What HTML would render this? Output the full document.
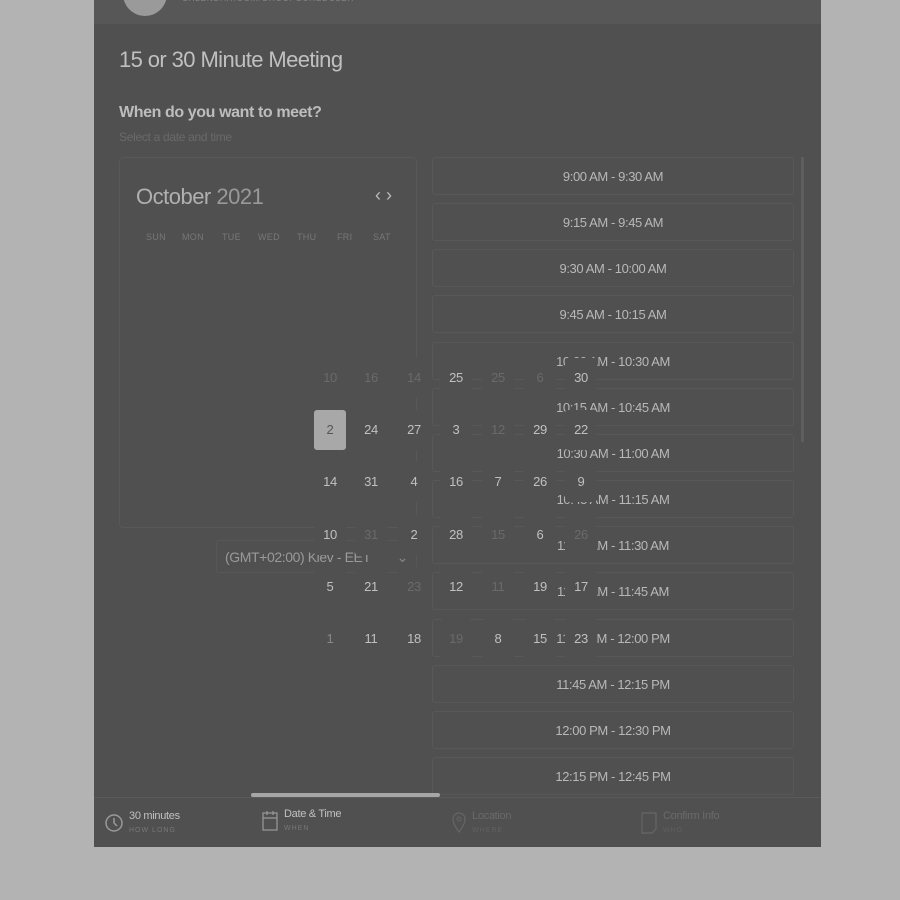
<!DOCTYPE html>
<html><head><style>
*{margin:0;padding:0;box-sizing:border-box}
body{width:900px;height:900px;background:#b3b3b3;font-family:"Liberation Sans",sans-serif;position:relative;overflow:hidden}
.panel{position:absolute;left:94px;top:0;width:727px;height:847px;background:#505050}
.hdr{position:absolute;left:94px;top:0;width:727px;height:24px;background:#575757}
.av{position:absolute;left:123px;top:-28px;width:44px;height:44px;border-radius:50%;background:#9a9a9a}
.a{position:absolute}
.slot{position:absolute;left:432px;width:362px;height:38px;border:1px solid #585858;border-radius:3px;color:#b8b8b8;font-size:13px;letter-spacing:-0.4px;text-align:center;line-height:38px}
.n{position:absolute;width:32px;height:40px;margin-left:-16px;margin-top:-20px;background:#505050;color:#c0c0c0;font-size:13px;letter-spacing:-0.3px;text-align:center;line-height:40px;border-radius:3px}
.d{color:#6a6a6a}
.wk{position:absolute;top:232px;font-size:9px;color:#777;letter-spacing:.3px}
</style></head><body>
<div class="panel"></div>
<div class="hdr"></div>
<div class="av"></div>
<div class="a" style="left:182px;top:-6px;width:220px;height:8px;color:#888;font-size:8px;letter-spacing:1px">CALENDAR.COM/GROUPSCHEDULER</div>
<div class="a" style="left:119px;top:47px;font-size:22px;color:#c0c0c0;letter-spacing:-0.6px">15 or 30 Minute Meeting</div>
<div class="a" style="left:119px;top:104px;font-size:16px;font-weight:bold;color:#bdbdbd;letter-spacing:-0.4px">When do you want to meet?</div>
<div class="a" style="left:119px;top:130px;font-size:12px;color:#6a6a6a;letter-spacing:-0.3px">Select a date and time</div>
<div class="a" style="left:119px;top:157px;width:298px;height:371px;border:1px solid #585858;border-radius:4px"></div>
<div class="a" style="left:136px;top:184px;font-size:22px;color:#b0b0b0;letter-spacing:-0.5px">October <span style="color:#999">2021</span></div>
<div class="a" style="left:375px;top:185px;font-size:18px;color:#bbb">‹ ›</div>
<div class="wk" style="left:146px">SUN</div><div class="wk" style="left:182px">MON</div><div class="wk" style="left:222px">TUE</div><div class="wk" style="left:258px">WED</div><div class="wk" style="left:297px">THU</div><div class="wk" style="left:337px">FRI</div><div class="wk" style="left:373px">SAT</div>
<div class="a" style="left:216px;top:540px;width:201px;height:33px;border:1px solid #575757;border-radius:3px;color:#9a9a9a;font-size:14px;letter-spacing:-0.4px;line-height:33px;padding-left:8px">(GMT+02:00) Kiev - EET<span style="position:absolute;right:8px;color:#888">⌄</span></div>
<div class="slot" style="top:157px">9:00 AM - 9:30 AM</div>
<div class="slot" style="top:203px">9:15 AM - 9:45 AM</div>
<div class="slot" style="top:249px">9:30 AM - 10:00 AM</div>
<div class="slot" style="top:295px">9:45 AM - 10:15 AM</div>
<div class="slot" style="top:342px">10:00 AM - 10:30 AM</div>
<div class="slot" style="top:388px">10:15 AM - 10:45 AM</div>
<div class="slot" style="top:434px">10:30 AM - 11:00 AM</div>
<div class="slot" style="top:480px">10:45 AM - 11:15 AM</div>
<div class="slot" style="top:526px">11:00 AM - 11:30 AM</div>
<div class="slot" style="top:572px">11:15 AM - 11:45 AM</div>
<div class="slot" style="top:619px">11:30 AM - 12:00 PM</div>
<div class="slot" style="top:665px">11:45 AM - 12:15 PM</div>
<div class="slot" style="top:711px">12:00 PM - 12:30 PM</div>
<div class="slot" style="top:757px">12:15 PM - 12:45 PM</div>
<div class="a" style="left:801px;top:157px;width:3px;height:285px;background:#5e5e5e"></div>
<div class="n d" style="left:330px;top:378px">10</div><div class="n d" style="left:371px;top:378px">16</div><div class="n d" style="left:414px;top:378px">14</div><div class="n" style="left:456px;top:378px">25</div><div class="n d" style="left:498px;top:378px">25</div><div class="n d" style="left:540px;top:378px">6</div><div class="n" style="left:581px;top:378px">30</div>
<div class="n" style="left:330px;top:430px;background:#a8a8a8;color:#555">2</div><div class="n" style="left:371px;top:430px">24</div><div class="n" style="left:414px;top:430px">27</div><div class="n" style="left:456px;top:430px">3</div><div class="n d" style="left:498px;top:430px">12</div><div class="n" style="left:540px;top:430px">29</div><div class="n" style="left:581px;top:430px">22</div>
<div class="n" style="left:330px;top:482px">14</div><div class="n" style="left:371px;top:482px">31</div><div class="n" style="left:414px;top:482px">4</div><div class="n" style="left:456px;top:482px">16</div><div class="n" style="left:498px;top:482px">7</div><div class="n" style="left:540px;top:482px">26</div><div class="n" style="left:581px;top:482px">9</div>
<div class="n" style="left:330px;top:535px">10</div><div class="n d" style="left:371px;top:535px">31</div><div class="n" style="left:414px;top:535px">2</div><div class="n" style="left:456px;top:535px">28</div><div class="n d" style="left:498px;top:535px">15</div><div class="n" style="left:540px;top:535px">6</div><div class="n d" style="left:581px;top:535px">26</div>
<div class="n" style="left:330px;top:587px">5</div><div class="n" style="left:371px;top:587px">21</div><div class="n d" style="left:414px;top:587px">23</div><div class="n" style="left:456px;top:587px">12</div><div class="n d" style="left:498px;top:587px">11</div><div class="n" style="left:540px;top:587px">19</div><div class="n" style="left:581px;top:587px">17</div>
<div class="n d" style="left:330px;top:639px;color:#888">1</div><div class="n" style="left:371px;top:639px">11</div><div class="n" style="left:414px;top:639px">18</div><div class="n d" style="left:456px;top:639px">19</div><div class="n" style="left:498px;top:639px">8</div><div class="n" style="left:540px;top:639px">15</div><div class="n" style="left:581px;top:639px">23</div>
<div class="a" style="left:94px;top:797px;width:727px;height:1px;background:#5a5a5a"></div>
<div class="a" style="left:251px;top:793px;width:189px;height:4px;background:#a6a6a6;border-radius:2px"></div>
<svg class="a" style="left:105px;top:813px" width="18" height="20"><circle cx="9" cy="10" r="8" fill="none" stroke="#999" stroke-width="1.5"/><path d="M9 5v5l3 3" fill="none" stroke="#999" stroke-width="1.5"/></svg>
<div class="a" style="left:129px;top:810px;font-size:11px;color:#c0c0c0;letter-spacing:-0.3px">30 minutes</div>
<div class="a" style="left:129px;top:827px;font-size:7px;color:#777;letter-spacing:1px">HOW LONG</div>
<svg class="a" style="left:262px;top:810px" width="16" height="22"><rect x="1" y="3" width="14" height="17" fill="none" stroke="#999" stroke-width="1.2"/><path d="M1 8h14M5 1v4M11 1v4" stroke="#999" stroke-width="1.2"/></svg>
<div class="a" style="left:284px;top:808px;font-size:11px;color:#c0c0c0;letter-spacing:-0.3px">Date &amp; Time</div>
<div class="a" style="left:284px;top:825px;font-size:7px;color:#777;letter-spacing:1px">WHEN</div>
<svg class="a" style="left:451px;top:811px" width="16" height="22"><path d="M8 21C3 14 2 11 2 8a6 6 0 0 1 12 0c0 3-1 6-6 13z" fill="none" stroke="#666" stroke-width="1.2"/><circle cx="8" cy="8" r="2" fill="none" stroke="#666"/></svg>
<div class="a" style="left:472px;top:810px;font-size:11px;color:#6a6a6a;letter-spacing:-0.3px">Location</div>
<div class="a" style="left:472px;top:827px;font-size:7px;color:#606060;letter-spacing:1px">WHERE</div>
<svg class="a" style="left:641px;top:812px" width="16" height="22"><path d="M1 1h14v16l-4 4H1z" fill="none" stroke="#666" stroke-width="1.2"/></svg>
<div class="a" style="left:663px;top:810px;font-size:11px;color:#6a6a6a;letter-spacing:-0.3px">Confirm Info</div>
<div class="a" style="left:663px;top:827px;font-size:7px;color:#606060;letter-spacing:1px">WHO</div>
</body></html>
